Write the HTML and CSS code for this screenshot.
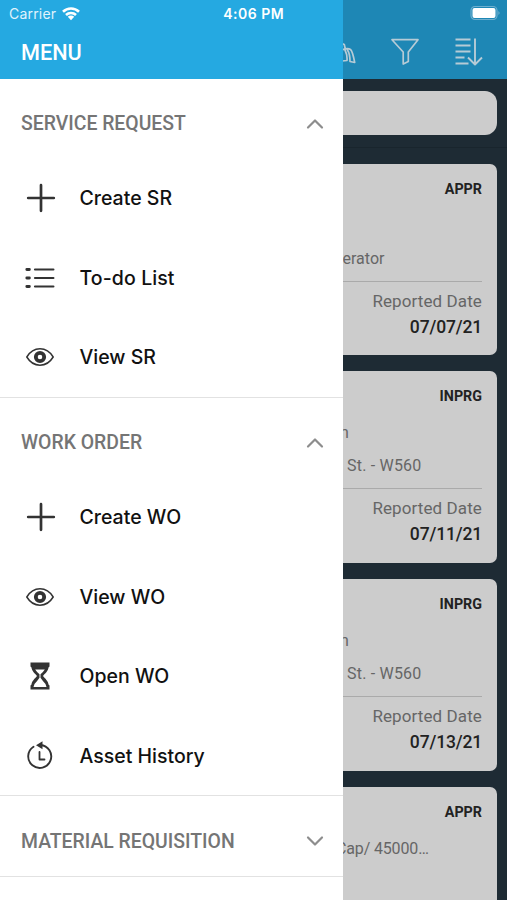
FILE: index.html
```
<!DOCTYPE html>
<html lang="en">
<head>
<meta charset="utf-8">
<title>Menu</title>
<link rel="stylesheet" href="styles.css">
</head>
<body>
<svg width="0" height="0" class="defs">
  <symbol id="plus" viewBox="0 0 30 30"><path d="M15 2.200v25.600M2.200 15h25.600" stroke-width="2.700"/></symbol>
  <symbol id="eye" viewBox="0 0 30 30"><path d="M1.800 15C5.200 9.400 9.700 6.800 15 6.800S24.800 9.400 28.200 15C24.800 20.600 20.300 23.200 15 23.200S5.200 20.600 1.800 15Z" stroke-width="1.500"/><circle cx="15" cy="15" r="4.200" stroke-width="3.800"/></symbol>
  <symbol id="up" viewBox="0 0 18 12"><path d="M2 9.500 9 2.500l7 7" stroke-width="2.200"/></symbol>
  <symbol id="down" viewBox="0 0 18 12"><path d="M2 2.500 9 9.500l7-7" stroke-width="2.200"/></symbol>
</svg>
<div class="screen">
  <main class="app">
    <header class="toolbar">
      <svg class="tool boat" viewBox="0 0 16 28"><path d="M0 6.500 2.300 7.500 3.300 12M0 13Q5.500 10.500 8.500 12.500Q10.500 14 12.700 25.500L8 24.500Q8 17 5.500 13M3 13Q5.500 18 5 23.500L0 24"/></svg>
      <svg class="tool filter" viewBox="0 0 30 30"><path d="M2 2.700h26L18.300 15v9.500L13.200 27V15Z"/></svg>
      <svg class="tool sort" viewBox="0 0 30 30"><path d="M1.500 2.500h15M1.500 8.500h15M1.500 14.500h15M1.500 20.500h9M1.500 26.500h13M21 1.500v26M14 20.500l7 7 7-7"/></svg>
    </header>
    <div class="searchbar"><div class="search"></div></div>
    <div class="cards">
      <article class="card">
        <b class="status">APPR</b>
        <p class="line"></p>
        <p class="line place">erator</p>
        <div class="report"><span>Reported Date</span><b>07/07/21</b></div>
      </article>
      <article class="card">
        <b class="status">INPRG</b>
        <p class="line cut">n</p>
        <p class="line place st">St. - W560</p>
        <div class="report"><span>Reported Date</span><b>07/11/21</b></div>
      </article>
      <article class="card">
        <b class="status">INPRG</b>
        <p class="line cut">n</p>
        <p class="line place st">St. - W560</p>
        <div class="report"><span>Reported Date</span><b>07/13/21</b></div>
      </article>
      <article class="card">
        <b class="status">APPR</b>
        <p class="line cap">Cap/ 45000…</p>
      </article>
    </div>
  </main>
  <nav class="drawer">
    <h1>MENU</h1>
    <section>
      <h2><span>SERVICE REQUEST</span><svg class="chev"><use href="#up"/></svg></h2>
      <a class="item"><svg class="icon plus"><use href="#plus"/></svg>Create SR</a>
      <a class="item todo"><svg class="icon" viewBox="0 0 30 30"><path d="M1.800 6.500h2.600M1.800 15h2.600M1.800 23.500h2.600" stroke-width="2.800"/><path d="M10 6.500h18.400M10 15h18.400M10 23.500h18.400" stroke-width="2.200"/></svg>To-do List</a>
      <a class="item"><svg class="icon"><use href="#eye"/></svg>View SR</a>
    </section>
    <section>
      <h2><span>WORK ORDER</span><svg class="chev"><use href="#up"/></svg></h2>
      <a class="item"><svg class="icon plus"><use href="#plus"/></svg>Create WO</a>
      <a class="item"><svg class="icon"><use href="#eye"/></svg>View WO</a>
      <a class="item"><svg class="icon" viewBox="0 0 30 30"><path class="solid" fill-rule="evenodd" d="M5.500 1.500h19v4l-1 1C23.200 10 20 12.500 18 15c2 2.500 5.200 5 5.500 8.500l1 1v4h-19v-4l1-1C6.800 20 10 17.500 12 15 10 12.500 6.800 10 6.500 6.500l-1-1ZM10.200 8.500h9.600Q18 11.300 15.500 13.300v3.400Q18.500 21 20.500 23L21.500 26h-13l1-3Q11.500 21 14.500 16.700v-3.400Q12 11.300 10.200 8.500Z"/></svg>Open WO</a>
      <a class="item"><svg class="icon" viewBox="0 0 30 30"><path d="M15.500 4A11.500 11.500 0 1 1 8.500 5.800" stroke-width="1.900"/><path class="solid" d="M11 4.200 17.500.2v8Z"/><path d="M14.500 11v7.500h5" stroke-width="1.800"/></svg>Asset History</a>
    </section>
    <section>
      <h2><span>MATERIAL REQUISITION</span><svg class="chev"><use href="#down"/></svg></h2>
    </section>
  </nav>
  <div class="statusbar">
    <span class="carrier">Carrier</span>
    <svg class="wifi" viewBox="0 0 20 15"><path d="M2 5.700a11.500 11.500 0 0 1 16 0M5 9a7.200 7.200 0 0 1 10 0"/><path class="solid" d="M6.800 10.800a4.500 4.500 0 0 1 6.400 0L10 14.200Z"/></svg>
    <span class="time">4:06 PM</span>
    <svg class="battery" viewBox="0 0 31 16"><rect class="case" x="1" y="1.500" width="26" height="13" rx="4"/><rect class="solid" x="2.500" y="3" width="23" height="10" rx="2"/><path class="tip" d="M28.500 6q2 2 0 4Z"/></svg>
  </div>
</div>
</body>
</html>
```

FILE: styles.css
```
* { box-sizing: border-box; }
body { margin: 0; background: #1e2b34; }
h1, h2, p { margin: 0; }
svg { fill: none; stroke: currentColor; stroke-linecap: round; stroke-linejoin: round; flex: none; }
.defs { position: absolute; }
.solid { fill: currentColor; stroke: none; }

.screen { position: relative; width: 507px; height: 900px; overflow: hidden; font-family: Roboto, sans-serif; }

.app { height: 900px; background: #1e2b34; }
.toolbar { height: 79px; background: #1e87b5; color: #b6cbd6; display: flex; align-items: flex-start; padding: 37px 23px 0 342px; }
.tool { stroke-width: 1.700px; height: 30px; }
.boat { width: 16px; height: 28px; }
.filter { width: 30px; margin-left: 32px; }
.sort { width: 30px; margin-left: auto; stroke-linecap: butt; stroke-width: 1.900px; }
.searchbar { height: 69px; padding: 12px 10px 0; border-bottom: 1px solid #19252d; }
.search { height: 44px; border-radius: 12px; background: #ccc; }
.cards { padding: 15.500px 10px 0; display: flex; flex-direction: column; gap: 16px; }
.card { height: 191.700px; flex: none; padding: 14px 15px 0; border-radius: 7px; background: #ccc; color: #666; }
.status { display: block; height: 22px; line-height: 22px; text-align: right; font-size: 14.300px; color: #222; }
.line { height: 33px; line-height: 33px; margin-left: 318px; font-size: 16px; white-space: nowrap; }
.status + .line { margin-top: 9px; }
.cut { margin-left: 315px; }
.place { height: 39px; margin-left: 317.500px; }
.st { margin-left: 322px; letter-spacing: 0.200px; }
.cap { margin-left: 311px; letter-spacing: -0.150px; }
.report { display: flex; flex-direction: column; align-items: flex-end; border-top: 1px solid #aaa; padding-top: 6px; line-height: 26px; font-size: 17px; }
.report span { letter-spacing: 0.100px; }
.report b { font-weight: 500; font-size: 17.500px; letter-spacing: -0.150px; color: #222; }

.drawer { position: absolute; left: 0; top: 0; width: 343px; height: 900px; background: #fff; }
.drawer h1 { height: 79px; padding: 38px 21px 0; background: #25a9e1; color: #fff; font-size: 21.700px; line-height: 29px; font-weight: 500; }
.drawer section { border-bottom: 1px solid #e2e2e2; }
.drawer h2 { height: 79.800px; padding: 10px 19px 0 21px; display: flex; align-items: center; justify-content: space-between; color: #757575; font-size: 19.400px; font-weight: 500; }
.chev { width: 18px; height: 12px; color: #8d8d8d; }
.item { height: 79.400px; padding-left: 25px; display: flex; align-items: center; gap: 24.500px; color: #111; font: 500 19.500px Inter, sans-serif; }
.todo { letter-spacing: 0.100px; }
.icon { width: 30px; height: 30px; color: #333; }
.plus { margin: 0 -1px 0 1px; }

.statusbar { position: absolute; left: 0; top: 0; width: 507px; height: 26px; padding: 0 6px 0 9px; display: flex; align-items: center; color: #fff; font: 400 14px Inter, sans-serif; }
.carrier { color: #e0f3fc; letter-spacing: 0.200px; }
.wifi { width: 20px; height: 15px; margin-left: 4.500px; stroke-width: 2.600px; stroke-linecap: butt; }
.time { margin-left: 142.500px; font-weight: 600; letter-spacing: 0.500px; }
.battery { width: 31px; height: 16px; margin-left: auto; }
.case { stroke: #6eafcf; stroke-width: 1.200px; }
.tip { fill: #81b8d2; stroke: none; }
```
